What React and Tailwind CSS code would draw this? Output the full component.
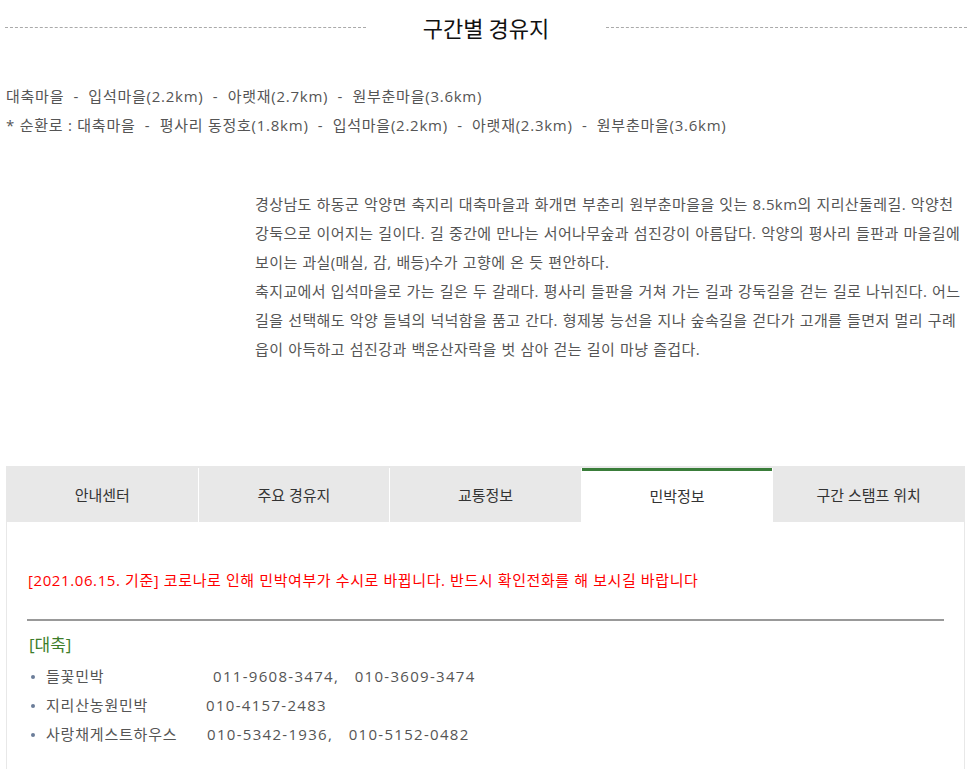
import React from 'react';

const tabs = ['안내센터', '주요 경유지', '교통정보', '민박정보', '구간 스탬프 위치'];

const lodgings = [
  { name: '들꽃민박', phone: '011-9608-3474,   010-3609-3474', w: 'w-[167px]' },
  { name: '지리산농원민박', phone: '010-4157-2483', w: 'w-[160px]' },
  { name: '사랑채게스트하우스', phone: '010-5342-1936,   010-5152-0482', w: 'w-[161px]' },
];

const App = () => {
  return (
    <div className="w-[971px] min-h-[769px] bg-white text-[#555] font-['Open_Sans','Noto_Sans_CJK_KR',sans-serif] overflow-hidden">
      {/* 제목 */}
      <div className="flex items-center pl-[5px] pr-[4px] pt-[8px]">
        <div className="flex-1 border-t border-dashed border-[#aaa]" />
        <h2 className="px-[57px] text-[22px] leading-[38px] font-normal text-[#111] font-['Noto_Sans_CJK_KR',sans-serif]">구간별 경유지</h2>
        <div className="flex-1 border-t border-dashed border-[#aaa]" />
      </div>

      {/* 경유지 */}
      <div className="mt-[36px] pl-[6px] text-[15px] leading-[29px] tracking-[0.75px]">
        <p>대축마을 &nbsp;- &nbsp;입석마을(2.2km) &nbsp;- &nbsp;아랫재(2.7km) &nbsp;- &nbsp;원부춘마을(3.6km)</p>
        <p>* 순환로 : 대축마을 &nbsp;- &nbsp;평사리 동정호(1.8km) &nbsp;- &nbsp;입석마을(2.2km) &nbsp;- &nbsp;아랫재(2.3km) &nbsp;- &nbsp;원부춘마을(3.6km)</p>
      </div>

      {/* 소개 */}
      <div className="mt-[50px] pl-[255px] pr-[4px] text-[15px] leading-[29px] tracking-[0.4px] [word-spacing:0.5px]">
        <p>
          경상남도 하동군 악양면 축지리 대축마을과 화개면 부춘리 원부춘마을을 잇는 8.5km의 지리산둘레길. 악양천 강둑으로 이어지는 길이다. 길 중간에 만나는 서어나무숲과 섬진강이 아름답다. 악양의 평사리 들판과 마을길에 보이는 과실(매실, 감, 배등)수가 고향에 온 듯 편안하다.
        </p>
        <p>
          축지교에서 입석마을로 가는 길은 두 갈래다. 평사리 들판을 거쳐 가는 길과 강둑길을 걷는 길로 나뉘진다. 어느 길을 선택해도 악양 들녘의 넉넉함을 품고 간다. 형제봉 능선을 지나 숲속길을 걷다가 고개를 들면저 멀리 구례읍이 아득하고 섬진강과 백운산자락을 벗 삼아 걷는 길이 마냥 즐겁다.
        </p>
      </div>

      {/* 탭 */}
      <div className="mt-[102px] ml-[6px] w-[959px] border-x border-t-2 border-[#e8e8e8]">
        <div className="flex gap-px">
          {tabs.map((tab, i) => (
            <div
              key={tab}
              className={
                i === 3
                  ? 'flex-1 h-[54px] flex items-center justify-center bg-white border-t-[3px] border-[#3a7d3a] text-[15px] text-[#333]'
                  : 'flex-1 h-[54px] flex items-center justify-center bg-[#e8e8e8] text-[15px] text-[#333]'
              }
            >
              {tab}
            </div>
          ))}
        </div>

        <div className="px-[20px] pt-[45px] pb-[20px]">
          <p className="pl-[1px] text-[15px] leading-[26px] text-[#ff0000] tracking-[0.6px]">
            [2021.06.15. 기준] 코로나로 인해 민박여부가 수시로 바뀝니다. 반드시 확인전화를 해 보시길 바랍니다
          </p>
          <div className="mt-[26px] h-[2px] bg-[#999]" />
          <p className="mt-[11px] pl-[2px] text-[17px] leading-[26px] text-[#3d7d2a]">[대축]</p>
          <ul className="mt-[4px] text-[15px] leading-[29px] text-[#555]">
            {lodgings.map((item) => (
              <li key={item.name} className="flex items-center pl-[4px]">
                <span className="w-[4px] h-[4px] rounded-full bg-[#6b7d99] mr-[11px]" />
                <span className={`${item.w} tracking-[0.8px]`}>{item.name}</span>
                <span className="whitespace-pre tracking-[1.3px]">{item.phone}</span>
              </li>
            ))}
          </ul>
        </div>
      </div>
    </div>
  );
};

export default App;
